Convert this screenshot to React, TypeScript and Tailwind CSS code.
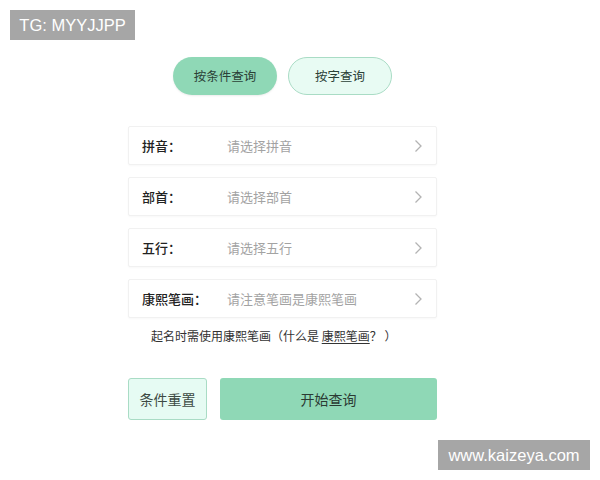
const ROWS = [
  { label: '拼音：', placeholder: '请选择拼音' },
  { label: '部首：', placeholder: '请选择部首' },
  { label: '五行：', placeholder: '请选择五行' },
  { label: '康熙笔画：', placeholder: '请注意笔画是康熙笔画' },
]

function Chevron() {
  return (
    <svg width="9" height="14" viewBox="0 0 9 14" fill="none" className="shrink-0">
      <path d="M1.5 1.5 L7 7 L1.5 12.5" stroke="#b3b3b3" strokeWidth="1.3" />
    </svg>
  )
}

export default function App() {
  return (
    <div
      className="relative w-[600px] h-[480px] bg-white overflow-hidden"
      style={{ fontFamily: '"Noto Sans CJK SC", "Noto Sans", sans-serif' }}
    >
      <div className="absolute left-[10px] top-[10px] w-[125px] h-[30px] bg-[#a6a6a6] flex items-center justify-center text-[16.5px] text-white font-['Liberation_Sans',sans-serif]">
        TG: MYYJJPP
      </div>

      <div className="ml-[128px] w-[309px] pt-[57px] flex flex-col">
        <div className="flex justify-center gap-[11px]">
          <button
            type="button"
            className="w-[104px] h-[38px] rounded-full bg-[#8fd8b6] text-[12.5px] text-[#2b4137] shadow-[0_1px_2px_rgba(0,0,0,0.08)]"
          >
            按条件查询
          </button>
          <button
            type="button"
            className="w-[104px] h-[38px] rounded-full bg-[#e8fbf3] border border-[#a9dcc5] text-[12.5px] text-[#2b4137]"
          >
            按字查询
          </button>
        </div>

        <div className="mt-[31px] flex flex-col gap-[12px]">
          {ROWS.map((row) => (
            <div
              key={row.label}
              className="h-[39px] flex items-center pl-[13px] pr-[13px] bg-white border border-[#f1f1f1] rounded-[2px] shadow-[0_1px_2px_rgba(0,0,0,0.03)]"
            >
              <span className="w-[85px] shrink-0 text-[13px] font-medium text-[#222]">{row.label}</span>
              <span className="flex-1 text-[13px] text-[#a3a3a3]">{row.placeholder}</span>
              <Chevron />
            </div>
          ))}
        </div>

        <p className="mt-[9px] pl-[23px] text-[12px] leading-[17px] text-[#333]">
          起名时需使用康熙笔画（什么是 <span className="underline underline-offset-2">康熙笔画</span>？ ）
        </p>

        <div className="mt-[34px] flex gap-[13px]">
          <button
            type="button"
            className="w-[79px] h-[42px] rounded-[3px] bg-[#e6fbf3] border border-[#a9dcc5] text-[14px] text-[#3d4a44]"
          >
            条件重置
          </button>
          <button
            type="button"
            className="flex-1 h-[42px] rounded-[3px] bg-[#8fd8b6] text-[14px] text-[#2b3a33]"
          >
            开始查询
          </button>
        </div>
      </div>

      <div className="absolute left-[438px] top-[440px] w-[152px] h-[30px] bg-[#a6a6a6] flex items-center justify-center text-[16.5px] text-white font-['Liberation_Sans',sans-serif]">
        www.kaizeya.com
      </div>
    </div>
  )
}
